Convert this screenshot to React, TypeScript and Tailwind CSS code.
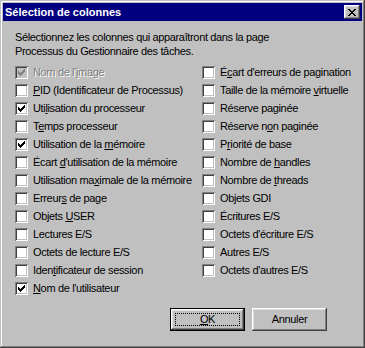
import React from "react";

type Item = { pre: string; key?: string; post?: string; checked?: boolean; disabled?: boolean };

const left: Item[] = [
  { pre: "Nom de l'", key: "i", post: "mage", checked: true, disabled: true },
  { pre: "", key: "P", post: "ID (Identificateur de Processus)" },
  { pre: "Uti", key: "l", post: "isation du processeur", checked: true },
  { pre: "T", key: "e", post: "mps processeur" },
  { pre: "Utilisation de la ", key: "m", post: "émoire", checked: true },
  { pre: "Écart ", key: "d", post: "'utilisation de la mémoire" },
  { pre: "Utilisation ma", key: "x", post: "imale de la mémoire" },
  { pre: "Erreur", key: "s", post: " de page" },
  { pre: "Objets ", key: "U", post: "SER" },
  { pre: "Lectures E/S" },
  { pre: "Octets de lecture E/S" },
  { pre: "Iden", key: "t", post: "ificateur de session" },
  { pre: "", key: "N", post: "om de l'utilisateur", checked: true },
];

const right: Item[] = [
  { pre: "É", key: "c", post: "art d'erreurs de pagination" },
  { pre: "Taille de la mémoire ", key: "v", post: "irtuelle" },
  { pre: "Réserve paginée" },
  { pre: "Réserve n", key: "o", post: "n paginée" },
  { pre: "P", key: "r", post: "iorité de base" },
  { pre: "Nombre de ", key: "h", post: "andles" },
  { pre: "Nombre de ", key: "t", post: "hreads" },
  { pre: "Objets GDI" },
  { pre: "Écritures E/S" },
  { pre: "Octets d'écriture E/S" },
  { pre: "Autres E/S" },
  { pre: "Octets d'autres E/S" },
];

const checkPixels = [
  "......X",
  ".....XX",
  "X...XXX",
  "XX.XXX.",
  "XXXXX..",
  ".XXX...",
  "..X....",
];

function Check({ color }: { color: string }) {
  const rects: React.ReactElement[] = [];
  checkPixels.forEach((row, y) =>
    row.split("").forEach((c, x) => {
      if (c === "X") rects.push(<rect key={`${x}-${y}`} x={x} y={y} width={1} height={1} fill={color} />);
    })
  );
  return (
    <svg width="7" height="7" viewBox="0 0 7 7" shapeRendering="crispEdges" className="absolute left-[3px] top-[3px]">
      {rects}
    </svg>
  );
}

function Row({ item }: { item: Item }) {
  return (
    <div className="flex h-[18px] items-center gap-[5px]">
      <div
        className={`relative h-[13px] w-[13px] shrink-0 ${item.disabled ? "bg-[#c0c0c0]" : "bg-white"} shadow-[inset_1px_1px_#808080,inset_-1px_-1px_#ffffff,inset_2px_2px_#404040,inset_-2px_-2px_#c0c0c0]`}
      >
        {item.checked && <Check color={item.disabled ? "#808080" : "#000000"} />}
      </div>
      <span
        className={`whitespace-nowrap leading-[13px] ${item.disabled ? "text-[#808080] [text-shadow:1px_1px_0_#ffffff]" : "text-black"}`}
      >
        {item.pre}
        {item.key && <u className="underline-offset-[1px]">{item.key}</u>}
        {item.post}
      </span>
    </div>
  );
}

export default function App() {
  return (
    <div
      className="relative flex h-[348px] w-[365px] flex-col bg-[#c0c0c0] p-[3px] text-[11px] tracking-[-0.35px] shadow-[inset_-1px_-1px_#404040,inset_1px_1px_#c0c0c0,inset_-2px_-2px_#808080,inset_2px_2px_#ffffff]"
      style={{ fontFamily: '"Liberation Sans", Arial, sans-serif' }}
    >
      <div className="flex h-[18px] items-center justify-between bg-[#000080] pl-[2px] pr-[2px]">
        <span className="text-[11px] font-bold leading-[13px] tracking-normal text-white">Sélection de colonnes</span>
        <div className="flex h-[14px] w-[16px] items-center justify-center bg-[#c0c0c0] shadow-[inset_-1px_-1px_#404040,inset_1px_1px_#ffffff,inset_-2px_-2px_#808080,inset_2px_2px_#dfdfdf]">
          <svg width="8" height="7" viewBox="0 0 8 7" shapeRendering="crispEdges">
            <path d="M0 0h2v1h-2zM6 0h2v1h-2zM1 1h2v1h-2zM5 1h2v1h-2zM2 2h4v1h-4zM3 3h2v1h-2zM2 4h4v1h-4zM1 5h2v1h-2zM5 5h2v1h-2zM0 6h2v1h-2zM6 6h2v1h-2z" fill="#000" />
          </svg>
        </div>
      </div>
      <div className="pl-[12px] pt-[9px] leading-[14px] text-black">
        <p>Sélectionnez les colonnes qui apparaîtront dans la page</p>
        <p>Processus du Gestionnaire des tâches.</p>
      </div>
      <div className="grid grid-cols-[187px_1fr] pl-[12px] pt-[5px]">
        <div className="flex flex-col">
          {left.map((it, i) => (
            <Row key={i} item={it} />
          ))}
        </div>
        <div className="flex flex-col">
          {right.map((it, i) => (
            <Row key={i} item={it} />
          ))}
        </div>
      </div>
      <div className="mt-[11px] flex justify-end gap-[7px] pr-[35px]">
        <button className="relative h-[23px] w-[75px] border border-black bg-[#c0c0c0] text-[11px] text-black shadow-[inset_-1px_-1px_#404040,inset_1px_1px_#ffffff,inset_-2px_-2px_#808080,inset_2px_2px_#dfdfdf]">
          <span className="absolute inset-[4px] border border-dotted border-black" />
          <span className="relative">
            <u>O</u>K
          </span>
        </button>
        <button className="h-[23px] w-[75px] bg-[#c0c0c0] text-[11px] text-black shadow-[inset_-1px_-1px_#404040,inset_1px_1px_#ffffff,inset_-2px_-2px_#808080,inset_2px_2px_#dfdfdf]">
          Annuler
        </button>
      </div>
    </div>
  );
}
